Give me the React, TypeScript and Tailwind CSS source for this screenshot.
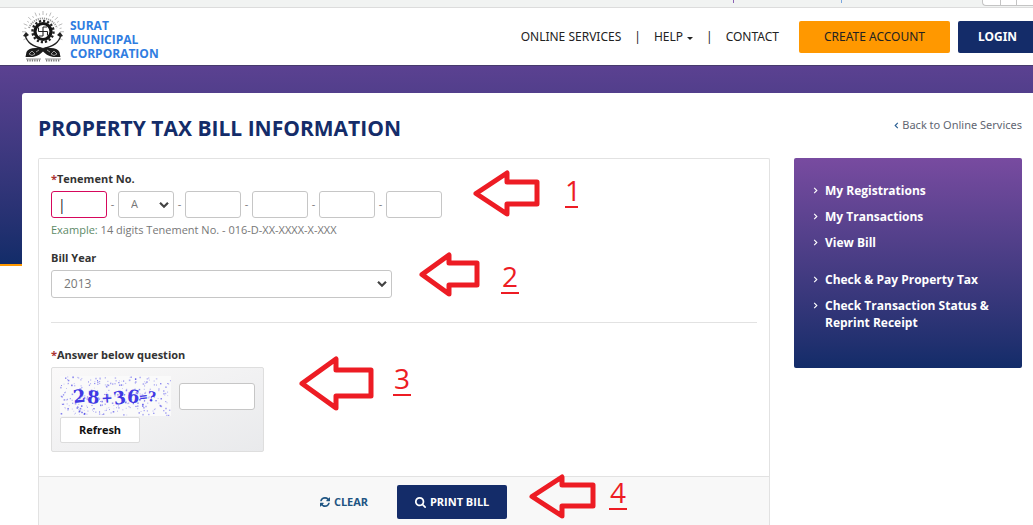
import React from "react";

const rays = Array.from({ length: 21 }, (_, i) => {
  const a = Math.PI * (-0.12 + (1.24 * i) / 20);
  const outer = i % 2 ? 19 : 21;
  return {
    x1: 21 - Math.cos(a) * 17,
    y1: 22 - Math.sin(a) * 17,
    x2: 21 - Math.cos(a) * outer,
    y2: 22 - Math.sin(a) * outer,
  };
});

function Emblem() {
  return (
    <svg viewBox="0 0 42 53" className="h-[53px] w-[42px] shrink-0" aria-hidden="true">
      {rays.map((r, i) => (
        <line key={i} {...r} stroke="#aaa" strokeWidth="0.8" />
      ))}
      <path d="M7 18 A15 15 0 0 1 35 18" fill="none" stroke="#999" strokeWidth="1.800" strokeDasharray="1.2 0.9" />
      <circle cx="21" cy="21.500" r="10.500" fill="none" stroke="#222" strokeWidth="2.400" strokeDasharray="2.2 1.9" />
      <circle cx="21" cy="21.500" r="8" fill="#fff" stroke="#161616" strokeWidth="3.200" />
      <path d="M21 17v9M16.500 21.500h9M21 17h4M25.500 21.500v4M21 26h-4M16.500 21.500v-4" fill="none" stroke="#222" strokeWidth="1.100" />
      <path d="M3 25C5 33 12 37 21 38.500M39 25C37 33 30 37 21 38.500" fill="none" stroke="#222" strokeWidth="1.200" />
      <path d="M1 26l3-4 3 3-3 2zM41 26l-3-4-3 3 3 2z" fill="#222" />
      <path d="M15 38C18 37 20 38 21 39C22 38 24 37 27 38C32 37.500 36 39 37.500 42L38.500 47H31C26 46 23 43.500 21 41.500C19 43.500 16 46 11 47H3.500L4.500 42C6 39 10 37.500 15 38Z" fill="#1c1c1c" />
      <path d="M7 44l3-3 3 3-3 1.500zM14 42l3-2M35 44l-3-3-3 3 3 1.500zM28 42l-3-2" fill="none" stroke="#bbb" strokeWidth="0.8" />
      <path d="M4 49h15M23 49h16" stroke="#777" strokeWidth="0.8" />
      <path d="M5 50.500h13M24 50.500h14" stroke="#777" strokeWidth="2" strokeDasharray="1.3 1.1" />
    </svg>
  );
}

function Chevron({ left = false, className = "" }: { left?: boolean; className?: string }) {
  return (
    <svg viewBox="0 0 5 8" className={`h-[7px] w-[5px] shrink-0 ${className}`} aria-hidden="true">
      <path d={left ? "M4 1L1 4l3 3" : "M1 1l3 3-3 3"} fill="none" stroke="currentColor" strokeWidth="1.300" />
    </svg>
  );
}

function SelectArrow() {
  return (
    <svg viewBox="0 0 10 7" className="pointer-events-none absolute top-1/2 right-[5px] h-[7px] w-[10px] -translate-y-1/2" aria-hidden="true">
      <path d="M1 1.200l4 4 4-4" fill="none" stroke="#444" strokeWidth="2.200" />
    </svg>
  );
}

const letters = ["A", "B", "C", "D", "E"];
const years = ["2013", "2014", "2015", "2016"];

const boxClass = "h-[27px] w-14 rounded-[3px] border border-[#c6c6c6] bg-white px-2 text-[12px] outline-none";

function TenementInputs() {
  return (
    <div className="flex items-center">
      <input id="tenement" aria-label="Ward" defaultValue="|" className="h-[27px] w-14 rounded-[3px] border border-[#d6085c] bg-white px-[6px] text-[14px] text-[#222] outline-none" />
      <Dash />
      <span className="relative">
        <select aria-label="Tenement zone" className="block h-[27px] w-14 appearance-none rounded-[3px] border border-[#c6c6c6] bg-white px-3 text-[11px] text-[#777]">
          {letters.map((l) => (
            <option key={l}>{l}</option>
          ))}
        </select>
        <SelectArrow />
      </span>
      {["Block", "Property", "Unit", "Suffix"].map((name) => (
        <React.Fragment key={name}>
          <Dash />
          <input aria-label={name} className={boxClass} />
        </React.Fragment>
      ))}
    </div>
  );
}

function Dash() {
  return <span className="w-[11px] text-center text-[11px] text-[#777]">-</span>;
}

const specks = Array.from({ length: 300 }, (_, i) => {
  const rnd = (n: number) => {
    const v = Math.sin(n * 127.1 + 31.7) * 43758.5453;
    return v - Math.floor(v);
  };
  return { x: rnd(i) * 111, y: rnd(i + 700) * 39, s: 0.6 + rnd(i + 1400) * 1.1, o: 0.2 + rnd(i + 2100) * 0.5 };
});

function Captcha() {
  return (
    <svg viewBox="0 0 112 40" className="h-10 w-28 bg-[#fafafa]" role="img" aria-label="28+36=?">
      {specks.map((p, i) => (
        <rect key={i} x={p.x} y={p.y} width={p.s} height={p.s} fill="#3a34e8" opacity={p.o} />
      ))}
      <text
        x="14 27 42 55 67 80 88"
        y="27 27 27 29 26 25 25"
        rotate="-6 4 -4 -10 6 -6 6"
        fill="#4038e4"
        fontFamily="DejaVu Serif, serif"
        fontWeight="bold"
        fontSize="18"
      >
        28<tspan fontSize="14">+</tspan>36<tspan fontSize="11">=</tspan><tspan fontSize="14">?</tspan>
      </text>
    </svg>
  );
}

function RefreshIcon() {
  return (
    <svg viewBox="0 128 1536 1536" className="size-[10px]" fill="currentColor" aria-hidden="true">
      <path d="M1511 1056q0 5-1 7-64 268-268 434.500t-478 166.500q-146 0-282.500-55t-243.500-157l-129 129q-19 19-45 19t-45-19-19-45v-448q0-26 19-45t45-19h448q26 0 45 19t19 45-19 45l-137 137q71 66 161 102t187 36q134 0 250-65t186-179q11-17 53-117 8-23 30-23h192q13 0 22.500 9.500t9.500 22.500zm25-800v448q0 26-19 45t-45 19h-448q-26 0-45-19t-19-45 19-45l138-138q-148-137-349-137-134 0-250 65t-186 179q-11 17-53 117-8 23-30 23h-199q-13 0-22.500-9.500t-9.500-22.500v-7q65-268 270-434.500t480-166.500q146 0 284 55.500t245 156.500l130-129q19-19 45-19t45 19 19 45z" />
    </svg>
  );
}

function SearchIcon() {
  return (
    <svg viewBox="64 128 1664 1664" className="size-[11px]" fill="currentColor" aria-hidden="true">
      <path d="M1216 832q0-185-131.500-316.500t-316.500-131.500-316.500 131.500-131.500 316.500 131.500 316.500 316.500 131.500 316.500-131.500 131.500-316.500zm512 832q0 52-38 90t-90 38q-54 0-90-38l-343-342q-179 124-399 124-143 0-273.500-55.500t-225-150-150-225-55.500-273.500 55.500-273.500 150-225 225-150 273.500-55.500 273.500 55.500 225 150 150 225 55.500 273.500q0 220-124 399l343 343q37 37 37 90z" />
    </svg>
  );
}

type StepProps = { n: number; place: string; w: number; h: number; notch: number; top: number; bottom: number; label: string };

/* Numbered arrow lying over the form, pointing at one step. */
function Step({ n, place, w, h, notch, top, bottom, label }: StepProps) {
  const mid = h / 2;
  const d = `M3 ${mid}L${notch} 4V${top}H${w - 3}V${bottom}H${notch}V${h - 4}Z`;
  return (
    <div className={`pointer-events-none absolute flex items-start ${place}`}>
      <svg width={w} height={h} viewBox={`0 0 ${w} ${h}`} aria-hidden="true">
        <path d={d} fill="none" stroke="#ed1c24" strokeWidth="5" strokeLinejoin="round" />
      </svg>
      <span className={`border-b-2 border-[#ed1c24] text-center text-[28px] leading-8 text-[#ed1c24] ${label}`}>{n}</span>
    </div>
  );
}

function SideLink({ children }: { children: React.ReactNode }) {
  return (
    <li>
      <a href="#" className="flex gap-[7px] text-[12px] leading-[17px] font-bold text-white">
        <Chevron className="mt-[5px]" />
        <span>{children}</span>
      </a>
    </li>
  );
}

export default function App() {
  return (
    <div className="relative min-h-screen overflow-hidden bg-white font-['Open_Sans','Noto_Sans',sans-serif] text-[#333]">
      <div className="flex h-2 justify-end overflow-hidden border-b border-[#dcdcdc] bg-[#f1f3f2]">
        <span className="mr-[107px] h-[3px] w-px bg-[#8b62b5]" />
        <span className="mr-[140px] h-[3px] w-px bg-[#7aa7e0]" />
        <span className="h-[6px] w-[18px] rounded-bl-sm border-b border-l border-[#c4c4c4] bg-white" />
        <span className="h-[6px] w-4 border-b border-l border-[#c4c4c4] bg-white" />
        <span className="h-[6px] w-[17px] border-b border-l border-[#c4c4c4] bg-white" />
      </div>

      <header className="flex h-[57px] items-center justify-between pl-[22px]">
        <a href="#" className="flex items-center gap-[6px]">
          <Emblem />
          <span className="pt-[6px] text-[12px] leading-[14px] font-bold text-[#2f7de1]">
            SURAT
            <br />
            MUNICIPAL
            <br />
            CORPORATION
          </span>
        </a>
        <nav className="flex items-center font-['Noto_Sans','Open_Sans',sans-serif] text-[12px] text-[#222]">
          <a href="#">ONLINE SERVICES</a>
          <span className="px-[13px]">|</span>
          <a href="#" className="flex items-center gap-1">
            HELP
            <svg viewBox="0 0 6 3" className="mt-1 h-[3px] w-[6px]" aria-hidden="true">
              <path d="M0 0h6L3 3z" fill="currentColor" />
            </svg>
          </a>
          <span className="px-[13px]">|</span>
          <a href="#">CONTACT</a>
          <a href="#" className="ml-5 flex h-8 w-[151px] items-center justify-center rounded-[2px] bg-[#ff9800] text-[#222]">
            CREATE ACCOUNT
          </a>
          <a href="#" className="ml-2 flex h-8 w-[75px] items-center rounded-l-[2px] bg-[#142c69] pl-5 font-bold text-white">
            LOGIN
          </a>
        </nav>
      </header>

      <div className="grid">
        <div className="col-start-1 row-start-1 h-[201px] border-t border-b-2 border-t-[#463a6c] border-b-[#ff9800] bg-linear-to-b from-[#5b4191] to-[#122c69]" />
        <main className="col-start-1 row-start-1 mt-7 ml-[22px] rounded-tl-[3px] bg-white pr-[11px] pl-4">
          <div className="flex items-center justify-between pt-[19px] pb-[14px]">
            <h1 className="text-[21px] leading-8 font-bold text-[#142c69]">PROPERTY TAX BILL INFORMATION</h1>
            <a href="#" className="flex items-center gap-[3px] pb-[6px] font-['Noto_Sans','Open_Sans',sans-serif] text-[11px] text-[#5f6672]">
              <Chevron left className="text-[#2a5f93]" />
              Back to Online Services
            </a>
          </div>

          <div className="grid grid-cols-[1fr_228px] items-start gap-6">
            <form className="rounded-t-[2px] border border-b-0 border-[#e2e2e2]" onSubmit={(e) => e.preventDefault()}>
              <div className="px-3 pt-[11px] pb-6">
                <label htmlFor="tenement" className="block pb-1 text-[11px] leading-[17px] font-bold">
                  <span className="text-[#a33]">*</span>Tenement No.
                </label>
                <TenementInputs />
                <p className="pt-[3px] text-[11px] leading-[17px] text-[#777]">
                  <span className="text-[#5d8a68]">Example:</span> 14 digits Tenement No. - 016-D-XX-XXXX-X-XXX
                </p>

                <label htmlFor="year" className="block pt-[11px] pb-1 text-[11px] leading-[17px] font-bold">
                  Bill Year
                </label>
                <span className="relative block w-[341px]">
                  <select id="year" className="block h-7 w-full appearance-none rounded-[3px] border border-[#c6c6c6] bg-white px-3 text-[12px] text-[#777]">
                    {years.map((y) => (
                      <option key={y}>{y}</option>
                    ))}
                  </select>
                  <SelectArrow />
                </span>

                <hr className="mt-6 border-[#e2e2e2]" />

                <label htmlFor="answer" className="block pt-[23px] pb-1 text-[11px] leading-[17px] font-bold">
                  <span className="text-[#a33]">*</span>Answer below question
                </label>
                <div className="h-[85px] w-[213px] rounded-[2px] border border-[#dedede] bg-linear-to-br from-[#faf9f9] to-[#e9eaec] p-2">
                  <div className="flex items-center gap-2">
                    <Captcha />
                    <input id="answer" className="h-[27px] w-19 rounded-[3px] border border-[#c6c6c6] bg-white px-2 text-[12px]" />
                  </div>
                  <button type="button" className="mt-px h-[26px] w-20 rounded-[2px] border border-[#dcdcdc] bg-white text-[11px] font-bold text-[#111]">
                    Refresh
                  </button>
                </div>
              </div>
              <div className="flex items-center justify-center gap-[29px] border-t border-[#e2e2e2] bg-[#f8f8f8] pt-2 pb-[6px] pl-[19px]">
                <button type="reset" className="flex items-center gap-1 text-[11px] font-bold text-[#1f5583]">
                  <RefreshIcon />
                  CLEAR
                </button>
                <button type="submit" className="flex h-[34px] w-[110px] items-center justify-center gap-1 rounded-[2px] bg-[#142c69] text-[11px] font-bold text-white">
                  <SearchIcon />
                  PRINT BILL
                </button>
              </div>
            </form>

            <aside className="rounded-[2px] bg-linear-to-b from-[#784ba0] to-[#122c69] pt-6 pr-5 pb-[37px] pl-[19px]">
              <ul className="flex flex-col gap-[9px]">
                <SideLink>My Registrations</SideLink>
                <SideLink>My Transactions</SideLink>
                <SideLink>View Bill</SideLink>
              </ul>
              <ul className="flex flex-col gap-[9px] pt-5">
                <SideLink>Check &amp; Pay Property Tax</SideLink>
                <SideLink>Check Transaction Status &amp; Reprint Receipt</SideLink>
              </ul>
            </aside>
          </div>
        </main>
      </div>

      <Step n={1} place="top-[169px] left-[473px]" w={67} h={49} notch={34} top={13} bottom={35} label="ml-[25px] mt-[5px] w-[13px]" />
      <Step n={2} place="top-[251px] left-[419px]" w={61} h={47} notch={30} top={12} bottom={34} label="ml-[21px] mt-[9px] w-[18px]" />
      <Step n={3} place="top-[355px] left-[299px]" w={75} h={57} notch={37} top={15} bottom={41} label="ml-[19px] mt-[7px] w-[18px]" />
      <Step n={4} place="top-[473px] left-[529px]" w={67} h={47} notch={33} top={12} bottom={33} label="ml-[13px] mt-[3px] w-[18px]" />
    </div>
  );
}
